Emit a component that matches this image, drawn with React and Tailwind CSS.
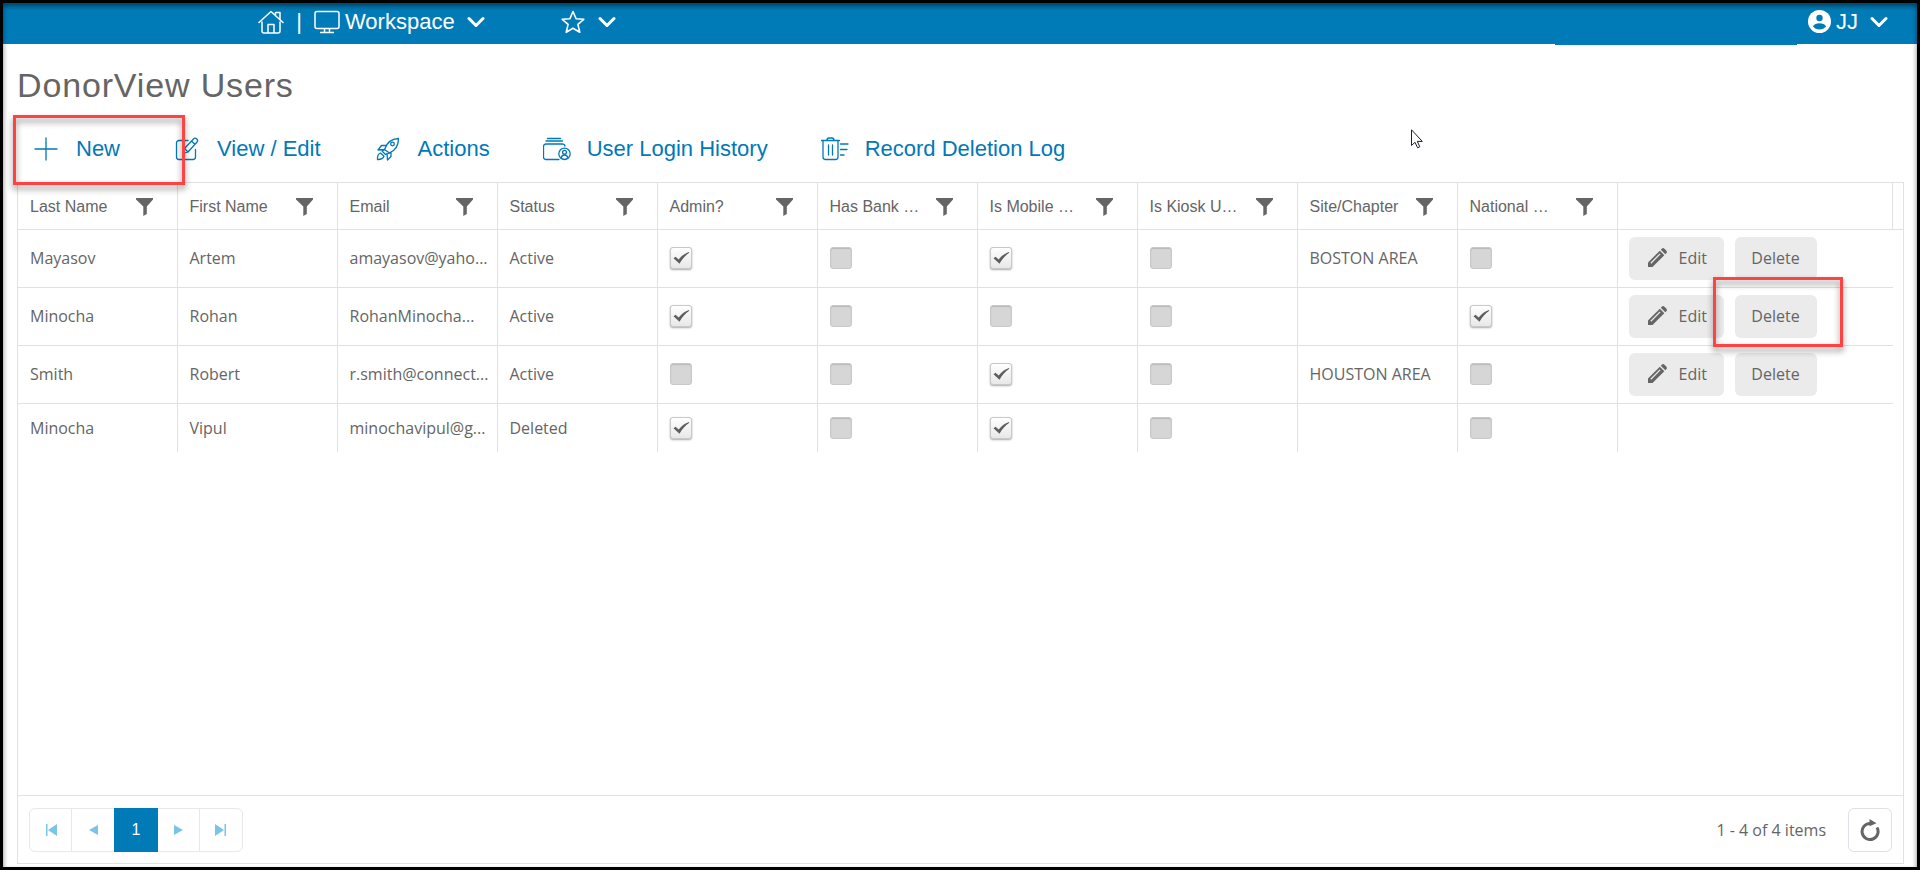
import { useState } from "react";

const COLUMNS = [
  "Last Name",
  "First Name",
  "Email",
  "Status",
  "Admin?",
  "Has Bank …",
  "Is Mobile …",
  "Is Kiosk U…",
  "Site/Chapter",
  "National …",
];

const USERS = [
  { last: "Mayasov", first: "Artem", email: "amayasov@yaho...", status: "Active", admin: true, bank: false, mobile: true, kiosk: false, site: "BOSTON AREA", national: false },
  { last: "Minocha", first: "Rohan", email: "RohanMinocha...", status: "Active", admin: true, bank: false, mobile: false, kiosk: false, site: "", national: true, marked: true },
  { last: "Smith", first: "Robert", email: "r.smith@connect...", status: "Active", admin: false, bank: false, mobile: true, kiosk: false, site: "HOUSTON AREA", national: false },
  { last: "Minocha", first: "Vipul", email: "minochavipul@g...", status: "Deleted", admin: true, bank: false, mobile: true, kiosk: false, site: "", national: false },
];

function Chevron() {
  return (
    <svg width="18" height="12" viewBox="0 0 18 12" fill="none" stroke="currentColor" strokeWidth="3" strokeLinecap="round" strokeLinejoin="round">
      <path d="M2 2.5l7 7 7-7" />
    </svg>
  );
}

function HomeIcon() {
  return (
    <svg width="26" height="24" viewBox="0 0 26 24" fill="none" stroke="currentColor" strokeWidth="1.5" strokeLinecap="round" strokeLinejoin="round">
      <path d="M1 12.5L13 1.5l12 11M4 12v9a2 2 0 0 0 2 2h14a2 2 0 0 0 2-2v-9M17.5 5V2.5H22v7M10 23v-8.500h6V23" />
    </svg>
  );
}

function MonitorIcon() {
  return (
    <svg width="26" height="24" viewBox="0 0 26 24" fill="none" stroke="currentColor" strokeWidth="1.5" strokeLinejoin="round">
      <rect x="1" y="1.500" width="24" height="17" rx="2" />
      <path d="M10.500 18.500v3.500M15.500 18.500v3.500M6 22.500h14" />
    </svg>
  );
}

function StarIcon() {
  return (
    <svg width="24" height="24" viewBox="0 0 24 24" fill="none" stroke="currentColor" strokeWidth="1.6" strokeLinejoin="round">
      <path d="M12 1.500l3.100 7.200 7.700.6-5.900 5.100 1.900 7.900L12 18.200l-6.800 4.100 1.900-7.900L1.200 9.300l7.700-.6z" />
    </svg>
  );
}

function PersonIcon() {
  return (
    <svg width="23" height="23" viewBox="0 0 23 23">
      <circle cx="11.500" cy="11.500" r="11.500" fill="#fff" />
      <circle cx="11.500" cy="8" r="3.200" fill="#007bb8" />
      <path d="M5 16.600c1-2.600 3.500-3.400 6.500-3.400s5.500.8 6.500 3.400c-1.600 2-3.800 3-6.500 3s-4.900-1-6.500-3z" fill="#007bb8" />
    </svg>
  );
}

const toolIcons = {
  plus: <path d="M14 3v22M3 14h22" />,
  edit: (
    <path d="M15 5.500H6a2.500 2.500 0 0 0-2.500 2.500v14A2.500 2.500 0 0 0 6 24.500h14a2.500 2.500 0 0 0 2.500-2.500v-7.500M10 18.500l1.500-5L20.500 4a2.300 2.300 0 0 1 3.300 3.300L15 17zM11.500 13.500L15 17M18.500 6l3.400 3.300" />
  ),
  rocket: (
    <>
      <path d="M10.500 14.500C12.500 8.500 17 3.800 24.500 3.500c0 7-3.500 12-9 14.500zM12 10.500H7.500L4 15l6.500-.5M17 17v4.500L13.500 25l-.5-6.500" />
      <circle cx="18.500" cy="9" r="1.800" />
      <path d="M10.500 14.500L8 16l3.500 3.500 4-1.500M3.500 24.500c-.3-3 .5-5.500 3-6.500l3.500 3.300c-.9 2.500-3.500 3.300-6.500 3.200z" />
    </>
  ),
  history: (
    <>
      <path d="M4.500 3.500h13M3 6h16.500M16 24.500H3a2.500 2.500 0 0 1-2.500-2.500V11.500A2.500 2.500 0 0 1 3 9h16.500a2.500 2.500 0 0 1 2.500 2" />
      <circle cx="21.500" cy="18.800" r="5.700" />
      <circle cx="21.500" cy="17.300" r="1.900" />
      <path d="M18.200 23.300c.2-2.300 1.300-3.300 3.300-3.300s3.100 1 3.300 3.300" />
    </>
  ),
  trash: (
    <path d="M.5 5.500h18M6 5.500c0-1.600.8-2.500 2-2.500h3c1.200 0 2 .9 2 2.500M2 5.500V22A2.500 2.500 0 0 0 4.500 24.500h10A2.500 2.500 0 0 0 17 22V5.500M7.500 10v10M11.500 10v10M19.500 9H27M19.500 14.500h6.500M19.500 20h3.500" />
  ),
};

function ToolButton({ icon, label, marked }) {
  return (
    <button type="button" className="relative flex items-center gap-4 h-full text-[22px] leading-7 text-[#0079b8]">
      <svg className="w-7 h-7 shrink-0" viewBox="0 0 28 28" fill="none" stroke="currentColor" strokeWidth="1.3" strokeLinecap="round" strokeLinejoin="round">
        {toolIcons[icon]}
      </svg>
      {label}
      {marked && <Callout className="-left-[19px] top-0 w-[172px] h-[70px]" />}
    </button>
  );
}

// red highlight frame laid over a control
function Callout({ className }) {
  return (
    <span className={`absolute z-10 pointer-events-none border-3 border-[#ff4242] drop-shadow-[0_4px_3px_rgba(0,0,0,0.45)] ${className}`} />
  );
}

function FilterIcon() {
  return (
    <svg width="17" height="18" viewBox="0 0 17 18" fill="#656565">
      <path d="M0 0h17v1.500L10.800 8.500V16l-3.500 2V8.500L0 1.500z" />
    </svg>
  );
}

function PencilIcon() {
  return (
    <svg width="20" height="20" viewBox="0 0 20 20" fill="none">
      <path d="M1 14.500L12.800 2.700l4.500 4.500L5.500 19H1z" fill="#656565" />
      <path d="M3.800 15.200l9.300-9.300" stroke="#ebebeb" strokeWidth="1.300" />
      <path d="M13.800 1.700l1-1c.8-.8 1.800-.8 2.600 0l1.900 1.900c.8.8.8 1.800 0 2.600l-1 1z" fill="#656565" />
    </svg>
  );
}

function CheckCell({ value, label }) {
  const [checked, setChecked] = useState(value);
  return (
    <div className="relative w-[22px] h-[22px]">
      <input
        type="checkbox"
        aria-label={label}
        checked={checked}
        onChange={(e) => setChecked(e.target.checked)}
        className="peer block w-[22px] h-[22px] appearance-none rounded-[3px] border border-[#c8c8c8] bg-[#d6d6d6] shadow-[inset_0_1px_1px_#b8b8b8] checked:bg-linear-to-b checked:from-white checked:to-[#e8e8e8] checked:shadow-[0_1px_2px_#aaaaaa]"
      />
      <svg className="absolute inset-0 hidden peer-checked:block pointer-events-none" width="22" height="22" viewBox="0 0 22 22" fill="#5e5e5e">
        <path d="M3.500 11.200l2-1.400 3.200 2.600c3-3.600 6.200-6 10.300-7.400l.3.800c-4.200 2.800-6.900 6.100-9.800 10.900z" />
      </svg>
    </div>
  );
}

function Cell({ children }) {
  return <td className="border-r border-[#dfe1e6] px-3 whitespace-nowrap">{children}</td>;
}

function UserRow({ user }) {
  const deleted = user.status === "Deleted";
  const button = "flex items-center h-[43px] rounded-md bg-[#ebebeb]";
  return (
    <tr className={deleted ? "h-[49px]" : "h-[58px] border-b border-[#dfe1e6]"}>
      <Cell>{user.last}</Cell>
      <Cell>{user.first}</Cell>
      <Cell>{user.email}</Cell>
      <Cell>{user.status}</Cell>
      <Cell><CheckCell value={user.admin} label="Admin" /></Cell>
      <Cell><CheckCell value={user.bank} label="Has bank access" /></Cell>
      <Cell><CheckCell value={user.mobile} label="Is mobile user" /></Cell>
      <Cell><CheckCell value={user.kiosk} label="Is kiosk user" /></Cell>
      <Cell>{user.site}</Cell>
      <Cell><CheckCell value={user.national} label="National" /></Cell>
      <td className="px-[11px]">
        {!deleted && (
          <div className="flex gap-[11px]">
            <button type="button" className={`${button} w-[95px] gap-3 pl-[18px]`}>
              <PencilIcon />
              Edit
            </button>
            <div className="relative">
              <button type="button" className={`${button} w-[82px] justify-center`}>
                Delete
              </button>
              {user.marked && <Callout className="-left-[22px] -top-[18px] w-[130px] h-[70px]" />}
            </div>
          </div>
        )}
      </td>
    </tr>
  );
}

function PagerButton({ label, divided, children }) {
  return (
    <button
      type="button"
      aria-label={label}
      className={`flex items-center justify-center w-[42px] h-[42px] text-[#78c5e7] ${divided ? "border-r border-[#e6e8ec]" : ""}`}
    >
      <svg width="12" height="12" viewBox="0 0 12 12" fill="currentColor">
        {children}
      </svg>
    </button>
  );
}

export default function App() {
  return (
    <div className="relative flex flex-col min-h-screen bg-white border-3 border-black text-[#656565] font-['Liberation_Sans',Arial,sans-serif]">
      {/* Top bar */}
      <header className="relative flex items-center h-[41px] pt-1.5 pb-2.5 pl-[255px] pr-[29px] bg-[#007bb8] text-white text-[22px] leading-7">
        <a href="#home" aria-label="Home"><HomeIcon /></a>
        <span className="w-[30px] text-center">|</span>
        <button type="button" className="flex items-center">
          <MonitorIcon />
          <span className="ml-[5px] mr-3">Workspace</span>
          <Chevron />
        </button>
        <button type="button" aria-label="Favorites" className="flex items-center gap-[13px] ml-[76px]">
          <StarIcon />
          <Chevron />
        </button>
        <button type="button" className="flex items-center ml-auto">
          <PersonIcon />
          <span className="ml-[5px] mr-3">JJ</span>
          <Chevron />
        </button>
        <span className="absolute top-full right-[120px] w-[242px] h-px bg-[#007bb8]" />
      </header>

      <main className="flex flex-col flex-1 pl-3.5 pr-[13px] pb-[3px]">
        <h1 className="mt-[21px] text-[34px] leading-10 tracking-wide">DonorView Users</h1>

        {/* Toolbar */}
        <div className="flex h-[67px] mt-2.5 pl-[15px] gap-[53px]">
          <ToolButton icon="plus" label="New" marked />
          <ToolButton icon="edit" label="View / Edit" />
          <ToolButton icon="rocket" label="Actions" />
          <ToolButton icon="history" label="User Login History" />
          <ToolButton icon="trash" label="Record Deletion Log" />
        </div>

        {/* Users grid */}
        <section className="flex flex-col flex-1 border border-[#dfe1e6]">
          <div className="flex flex-1 items-start">
            <table className="flex-1 w-full table-fixed border-collapse font-['Open_Sans','Noto_Sans',sans-serif] text-base">
              <colgroup>
                {COLUMNS.map((name, i) => (
                  <col key={name} className={i === 0 ? "w-[159px]" : "w-40"} />
                ))}
                <col />
              </colgroup>
              <thead className="font-['Liberation_Sans',Arial,sans-serif]">
                <tr className="h-[46px] border-b border-[#dfe1e6]">
                  {COLUMNS.map((name) => (
                    <th key={name} scope="col" className="border-r border-[#dfe1e6] pt-0.5 pl-3 pr-6 font-normal">
                      <div className="flex items-center justify-between whitespace-nowrap">
                        {name}
                        <FilterIcon />
                      </div>
                    </th>
                  ))}
                  <th scope="col" aria-label="Commands" className="border-r border-[#dfe1e6]" />
                </tr>
              </thead>
              <tbody>
                {USERS.map((user) => (
                  <UserRow key={user.email} user={user} />
                ))}
              </tbody>
            </table>
            {/* scrollbar gutter */}
            <div className="w-2.5 h-[47px] border-b border-[#dfe1e6]" />
          </div>

          <footer className="flex items-center justify-between h-[68px] px-[11px] border-t border-[#dfe1e6] text-base">
            <div className="flex items-center border border-[#e6e8ec] rounded-md">
              <PagerButton label="First page" divided>
                <path d="M1 0h1.500v12H1zM12 0v12L3 6z" />
              </PagerButton>
              <PagerButton label="Previous page">
                <path d="M11 1v10L2 6z" />
              </PagerButton>
              <button type="button" aria-current="page" className="w-11 h-11 -my-px bg-[#007bb8] text-white">
                1
              </button>
              <PagerButton label="Next page" divided>
                <path d="M1 1v10l9-5z" />
              </PagerButton>
              <PagerButton label="Last page">
                <path d="M9.500 0H11v12H9.500zM0 0v12l9-6z" />
              </PagerButton>
            </div>
            <div className="flex items-center gap-[22px] font-['Open_Sans','Noto_Sans',sans-serif]">
              1 - 4 of 4 items
              <button type="button" aria-label="Refresh" className="flex items-center justify-center w-11 h-11 border border-[#dfe1e6] rounded-md">
                <svg width="20" height="22" viewBox="0 0 20 22" fill="none">
                  <path d="M10 4.500a8 8 0 1 0 7 4" stroke="#656565" strokeWidth="3" />
                  <path d="M9.500 0l7 4.300-7 3z" fill="#656565" />
                </svg>
              </button>
            </div>
          </footer>
        </section>
      </main>

      {/* Mouse pointer */}
      <svg className="absolute top-[126px] left-[1408px] pointer-events-none" width="13" height="20" viewBox="0 0 13 20" fill="#fff" stroke="#1e1e2c" strokeWidth="1">
        <path d="M.5.800v15.700l3.500-3.200 2.600 5.500 2.200-1-2.500-5.400h5z" />
      </svg>
      <div className="absolute inset-0 pointer-events-none shadow-[inset_0_3px_5px_rgba(0,0,0,0.5)]" />
    </div>
  );
}
